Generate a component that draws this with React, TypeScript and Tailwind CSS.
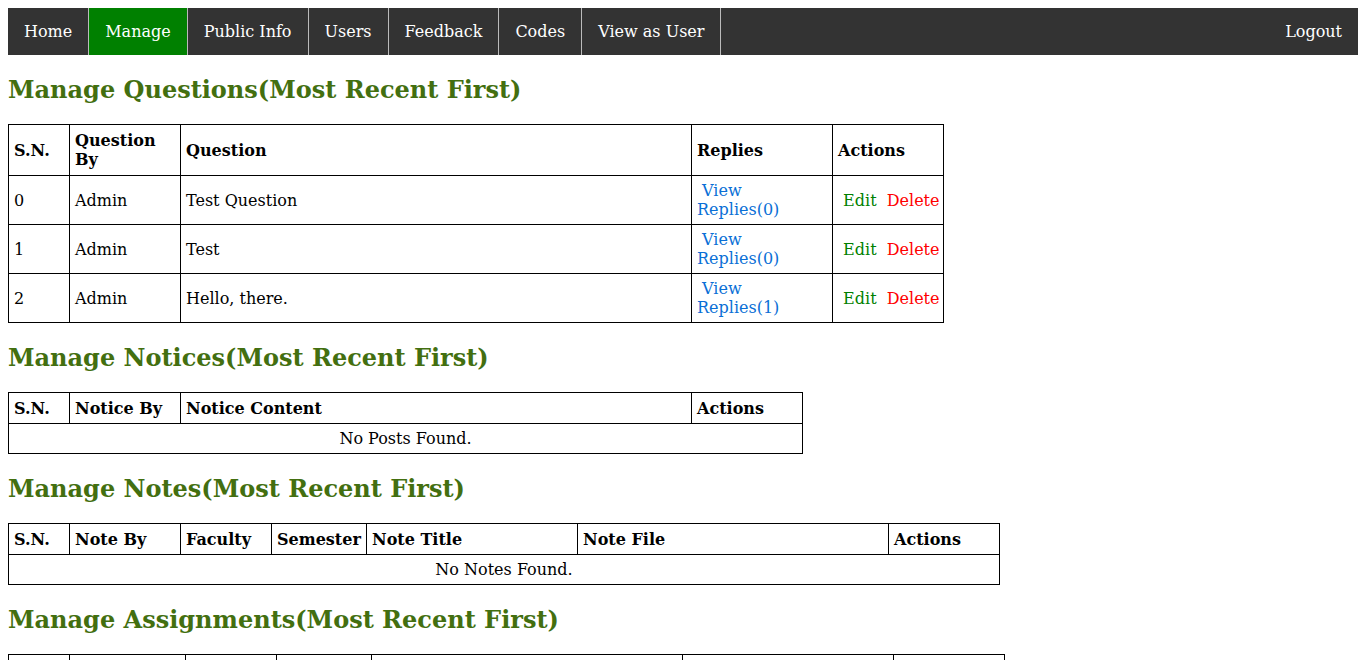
const navItems = ['Home', 'Manage', 'Public Info', 'Users', 'Feedback', 'Codes', 'View as User']

const questions = [
  { sn: 0, by: 'Admin', text: 'Test Question', replies: 0 },
  { sn: 1, by: 'Admin', text: 'Test', replies: 0 },
  { sn: 2, by: 'Admin', text: 'Hello, there.', replies: 1 },
]

const cell = 'border border-black p-[5px] text-left align-middle'

function Heading({ children }: { children: string }) {
  return <h2 className="my-[20px] text-[24px] font-bold leading-[29px] text-[#436f10]">{children}</h2>
}

function EmptyTable({
  widths,
  headers,
  message,
}: {
  widths: number[]
  headers: string[]
  message: string
}) {
  const total = widths.reduce((a, b) => a + b, 0)
  return (
    <table className="table-fixed border-collapse border border-black" style={{ width: total }}>
      <colgroup>
        {widths.map((w, i) => (
          <col key={i} style={{ width: w }} />
        ))}
      </colgroup>
      <thead>
        <tr className="h-[31px]">
          {headers.map((h) => (
            <th key={h} className={`${cell} font-bold`}>
              {h}
            </th>
          ))}
        </tr>
      </thead>
      <tbody>
        <tr className="h-[30px]">
          <td colSpan={headers.length} className="border border-black px-[5px] py-[5px] text-center">
            {message}
          </td>
        </tr>
      </tbody>
    </table>
  )
}

export default function App() {
  return (
    <div className="m-2 font-['DejaVu_Serif',serif] text-[16px] leading-[19px] text-black">
      <nav className="flex h-[47px] bg-[#333333] text-white">
        {navItems.map((item) => (
          <a
            key={item}
            href="#"
            className={`flex items-center border-r border-[#bbbbbb] px-4 ${item === 'Manage' ? 'bg-[#008000]' : ''}`}
          >
            {item}
          </a>
        ))}
        <a href="#" className="ml-auto flex items-center px-4">
          Logout
        </a>
      </nav>

      <Heading>Manage Questions(Most Recent First)</Heading>
      <table className="w-[935px] table-fixed border-collapse border border-black">
        <colgroup>
          <col className="w-[61px]" />
          <col className="w-[111px]" />
          <col className="w-[511px]" />
          <col className="w-[141px]" />
          <col className="w-[111px]" />
        </colgroup>
        <thead>
          <tr className="h-[51px]">
            <th className={cell}>S.N.</th>
            <th className={cell}>Question By</th>
            <th className={cell}>Question</th>
            <th className={cell}>Replies</th>
            <th className={cell}>Actions</th>
          </tr>
        </thead>
        <tbody>
          {questions.map((q) => (
            <tr key={q.sn} className="h-[49px]">
              <td className={cell}>{q.sn}</td>
              <td className={cell}>{q.by}</td>
              <td className={cell}>{q.text}</td>
              <td className={cell}>
                <a href="#" className="text-[#0a6fd6]">
                  {'\u00a0View Replies(' + q.replies + ')'}
                </a>
              </td>
              <td className={`${cell} whitespace-nowrap`}>
                <a href="#" className="text-[#008000]">
                  {'\u00a0Edit'}
                </a>
                {'\u00a0 '}
                <a href="#" className="text-[#ff0000]">
                  Delete
                </a>
              </td>
            </tr>
          ))}
        </tbody>
      </table>

      <Heading>Manage Notices(Most Recent First)</Heading>
      <EmptyTable
        widths={[61, 111, 511, 111]}
        headers={['S.N.', 'Notice By', 'Notice Content', 'Actions']}
        message="No Posts Found."
      />

      <Heading>Manage Notes(Most Recent First)</Heading>
      <EmptyTable
        widths={[61, 111, 91, 95, 211, 311, 111]}
        headers={['S.N.', 'Note By', 'Faculty', 'Semester', 'Note Title', 'Note File', 'Actions']}
        message="No Notes Found."
      />

      <Heading>Manage Assignments(Most Recent First)</Heading>
      <EmptyTable
        widths={[61, 116, 91, 95, 311, 211, 111]}
        headers={['S.N.', 'Assignment By', 'Faculty', 'Semester', 'Assignment Title', 'Assignment File', 'Actions']}
        message="No Assignments Found."
      />
    </div>
  )
}
